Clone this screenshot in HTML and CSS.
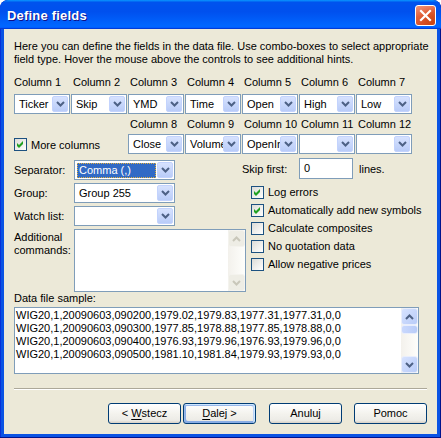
FILE: index.html
```html
<!DOCTYPE html>
<html>
<head>
<meta charset="utf-8">
<title>Define fields</title>
<link rel="stylesheet" href="styles.css">
</head>
<body>
<div class="window">
  <div class="titlebar">
    <span class="title">Define fields</span>
    <span class="close"><svg width="19" height="19" viewBox="0 0 19 19"><path d="M5 5L14 14M14 5L5 14" stroke="#fff" stroke-width="2.2" stroke-linecap="square"/></svg></span>
  </div>
  <div class="client">
    <p class="intro">Here you can define the fields in the data file. Use combo-boxes to select appropriate<br>field type. Hover the mouse above the controls to see additional hints.</p>

    <div class="row labels">
      <span class="clabel first">Column 1</span>
      <span class="clabel">Column 2</span>
      <span class="clabel">Column 3</span>
      <span class="clabel">Column 4</span>
      <span class="clabel">Column 5</span>
      <span class="clabel">Column 6</span>
      <span class="clabel">Column 7</span>
    </div>
    <div class="row combos">
      <div class="combo col"><span class="val">Ticker</span><span class="drop"><svg width="9" height="6" viewBox="0 0 9 6"><path d="M1 1L4.5 4.5L8 1" fill="none" stroke="#4D6185" stroke-width="2"/></svg></span></div>
      <div class="combo col"><span class="val">Skip</span><span class="drop"><svg width="9" height="6" viewBox="0 0 9 6"><path d="M1 1L4.5 4.5L8 1" fill="none" stroke="#4D6185" stroke-width="2"/></svg></span></div>
      <div class="combo col"><span class="val">YMD</span><span class="drop"><svg width="9" height="6" viewBox="0 0 9 6"><path d="M1 1L4.5 4.5L8 1" fill="none" stroke="#4D6185" stroke-width="2"/></svg></span></div>
      <div class="combo col"><span class="val">Time</span><span class="drop"><svg width="9" height="6" viewBox="0 0 9 6"><path d="M1 1L4.5 4.5L8 1" fill="none" stroke="#4D6185" stroke-width="2"/></svg></span></div>
      <div class="combo col"><span class="val">Open</span><span class="drop"><svg width="9" height="6" viewBox="0 0 9 6"><path d="M1 1L4.5 4.5L8 1" fill="none" stroke="#4D6185" stroke-width="2"/></svg></span></div>
      <div class="combo col"><span class="val">High</span><span class="drop"><svg width="9" height="6" viewBox="0 0 9 6"><path d="M1 1L4.5 4.5L8 1" fill="none" stroke="#4D6185" stroke-width="2"/></svg></span></div>
      <div class="combo col"><span class="val">Low</span><span class="drop"><svg width="9" height="6" viewBox="0 0 9 6"><path d="M1 1L4.5 4.5L8 1" fill="none" stroke="#4D6185" stroke-width="2"/></svg></span></div>
    </div>

    <div class="row labels second">
      <span class="clabel">Column 8</span>
      <span class="clabel">Column 9</span>
      <span class="clabel">Column 10</span>
      <span class="clabel">Column 11</span>
      <span class="clabel">Column 12</span>
    </div>
    <div class="row combos">
      <div class="more">
        <span class="cb"><svg width="11" height="11" viewBox="0 0 11 11"><polygon points="2,4 4,6 8,2 8,5 4,9 2,7" fill="#21A121"/></svg></span>
        <span>More columns</span>
      </div>
      <div class="combo col"><span class="val">Close</span><span class="drop"><svg width="9" height="6" viewBox="0 0 9 6"><path d="M1 1L4.5 4.5L8 1" fill="none" stroke="#4D6185" stroke-width="2"/></svg></span></div>
      <div class="combo col"><span class="val">Volume</span><span class="drop"><svg width="9" height="6" viewBox="0 0 9 6"><path d="M1 1L4.5 4.5L8 1" fill="none" stroke="#4D6185" stroke-width="2"/></svg></span></div>
      <div class="combo col"><span class="val">OpenInt</span><span class="drop"><svg width="9" height="6" viewBox="0 0 9 6"><path d="M1 1L4.5 4.5L8 1" fill="none" stroke="#4D6185" stroke-width="2"/></svg></span></div>
      <div class="combo col"><span class="val"></span><span class="drop"><svg width="9" height="6" viewBox="0 0 9 6"><path d="M1 1L4.5 4.5L8 1" fill="none" stroke="#4D6185" stroke-width="2"/></svg></span></div>
      <div class="combo col"><span class="val"></span><span class="drop"><svg width="9" height="6" viewBox="0 0 9 6"><path d="M1 1L4.5 4.5L8 1" fill="none" stroke="#4D6185" stroke-width="2"/></svg></span></div>
    </div>

    <div class="mid">
      <div class="left">
        <div class="frow first">
          <span class="flabel">Separator:</span>
          <div class="combo wide"><span class="val"><span class="sel">Comma (,)</span></span><span class="drop"><svg width="9" height="6" viewBox="0 0 9 6"><path d="M1 1L4.5 4.5L8 1" fill="none" stroke="#4D6185" stroke-width="2"/></svg></span></div>
        </div>
        <div class="frow">
          <span class="flabel">Group:</span>
          <div class="combo wide"><span class="val">Group 255</span><span class="drop"><svg width="9" height="6" viewBox="0 0 9 6"><path d="M1 1L4.5 4.5L8 1" fill="none" stroke="#4D6185" stroke-width="2"/></svg></span></div>
        </div>
        <div class="frow">
          <span class="flabel">Watch list:</span>
          <div class="combo wide"><span class="val"></span><span class="drop"><svg width="9" height="6" viewBox="0 0 9 6"><path d="M1 1L4.5 4.5L8 1" fill="none" stroke="#4D6185" stroke-width="2"/></svg></span></div>
        </div>
        <div class="frow top">
          <span class="flabel multi">Additional<br>commands:</span>
          <div class="textarea">
            <div class="tspace"></div>
            <div class="vscroll disabled">
              <span class="sbtn"><svg width="9" height="6" viewBox="0 0 9 6"><path d="M1 5L4.5 1.5L8 5" fill="none" stroke="#C9C7BA" stroke-width="2"/></svg></span>
              <span class="track"></span>
              <span class="sbtn"><svg width="9" height="6" viewBox="0 0 9 6"><path d="M1 1L4.5 4.5L8 1" fill="none" stroke="#C9C7BA" stroke-width="2"/></svg></span>
            </div>
          </div>
        </div>
      </div>
      <div class="right">
        <div class="skip">
          <span class="skiplabel">Skip first:</span>
          <span class="edit">0</span>
          <span>lines.</span>
        </div>
        <div class="checks">
          <div class="crow"><span class="cb"><svg width="11" height="11" viewBox="0 0 11 11"><polygon points="2,4 4,6 8,2 8,5 4,9 2,7" fill="#21A121"/></svg></span><span>Log errors</span></div>
          <div class="crow"><span class="cb"><svg width="11" height="11" viewBox="0 0 11 11"><polygon points="2,4 4,6 8,2 8,5 4,9 2,7" fill="#21A121"/></svg></span><span>Automatically add new symbols</span></div>
          <div class="crow"><span class="cb"></span><span>Calculate composites</span></div>
          <div class="crow"><span class="cb"></span><span>No quotation data</span></div>
          <div class="crow"><span class="cb"></span><span>Allow negative prices</span></div>
        </div>
      </div>
    </div>

    <div class="sample-label">Data file sample:</div>
    <div class="listbox">
      <div class="lines">
        <div>WIG20,1,20090603,090200,1979.02,1979.83,1977.31,1977.31,0,0</div>
        <div>WIG20,1,20090603,090300,1977.85,1978.88,1977.85,1978.88,0,0</div>
        <div>WIG20,1,20090603,090400,1976.93,1979.96,1976.93,1979.96,0,0</div>
        <div>WIG20,1,20090603,090500,1981.10,1981.84,1979.93,1979.93,0,0</div>
      </div>
      <div class="vscroll">
        <span class="sbtn"><svg width="9" height="6" viewBox="0 0 9 6"><path d="M1 5L4.5 1.5L8 5" fill="none" stroke="#4D6185" stroke-width="2"/></svg></span>
        <span class="thumb"></span>
        <span class="track"></span>
        <span class="sbtn"><svg width="9" height="6" viewBox="0 0 9 6"><path d="M1 1L4.5 4.5L8 1" fill="none" stroke="#4D6185" stroke-width="2"/></svg></span>
      </div>
    </div>

    <div class="groove"></div>

    <div class="buttons">
      <span class="btn back">&lt;&nbsp;<u>W</u>stecz</span>
      <span class="btn default"><u>D</u>alej&nbsp;&gt;</span>
      <span class="btn cancel">Anuluj</span>
      <span class="btn help">Pomoc</span>
    </div>
  </div>
</div>
</body>
</html>
```

FILE: styles.css
```css
html, body {
  margin: 0;
  padding: 0;
  background: #ffffff;
}

body {
  font-family: "Liberation Sans", Arial, sans-serif;
  font-size: 11px;
  color: #000;
}

.window {
  width: 441px;
  height: 438px;
  display: flex;
  flex-direction: column;
  background: #0A53E4;
  border-radius: 8px 8px 0 0;
  box-shadow: inset -1px -1px #00138C, inset 1px 1px #0831D9;
  overflow: hidden;
}

.titlebar {
  height: 29px;
  flex: none;
  display: flex;
  align-items: center;
  justify-content: space-between;
  padding: 0 5px 0 7px;
  background: linear-gradient(180deg, #0997FF, #0053EE 8%, #0050EE 40%, #0066FF 88%, #0066FF 93%, #005BFF 95%, #003DD7 96%, #003DD7);
  border-radius: 8px 8px 0 0;
}

.title {
  color: #fff;
  font-weight: bold;
  font-size: 13px;
  letter-spacing: 0.2px;
  text-shadow: 1px 1px #0F1089;
  padding-top: 1px;
}

.close {
  width: 21px;
  height: 21px;
  box-sizing: border-box;
  border: 1px solid #fff;
  border-radius: 3px;
  background: radial-gradient(circle at 85% 85%, #CC4614, transparent 60%), linear-gradient(160deg, #F0957A, #E2603A 45%, #D54A22);
  display: flex;
  align-items: center;
  justify-content: center;
  margin-top: 1px;
}

.client {
  flex: 1;
  margin: 0 4px 4px 4px;
  background: #ECE9D8;
  padding: 11px 10px 0 10px;
  display: flex;
  flex-direction: column;
}

.intro {
  margin: 0;
  line-height: 13px;
  white-space: nowrap;
}

.row {
  display: flex;
  gap: 1px;
}

.labels {
  line-height: 13px;
  white-space: nowrap;
  margin-top: 10px;
}

.labels.second {
  margin-top: 4px;
  padding-left: 114px;
}

.clabel {
  width: 56px;
  padding-left: 2px;
  box-sizing: border-box;
}

.clabel.first {
  padding-left: 0;
}

.combos {
  margin-top: 5px;
}

.labels.second + .combos {
  margin-top: 3px;
}

.combo {
  height: 20px;
  box-sizing: border-box;
  border: 1px solid #7F9DB9;
  background: #fff;
  padding: 1px;
  display: flex;
  align-items: stretch;
}

.combo.col {
  width: 56px;
}

.combo.wide {
  width: 101px;
}

.val {
  flex: 1;
  min-width: 0;
  overflow: hidden;
  white-space: nowrap;
  padding-left: 3px;
  line-height: 16px;
}

.sel {
  display: inline-block;
  box-sizing: border-box;
  width: 79px;
  margin-left: -2px;
  padding: 0 2px;
  background: #316AC5;
  color: #fff;
  outline: 1px dotted #E0B040;
  outline-offset: -1px;
  line-height: 15px;
}

.drop {
  width: 16px;
  flex: none;
  box-sizing: border-box;
  border: 1px solid #C3D3FD;
  border-radius: 2px;
  background: linear-gradient(180deg, #D7E2FE, #B9CCF8);
  display: flex;
  align-items: center;
  justify-content: center;
}

.more {
  width: 113px;
  display: flex;
  align-items: center;
  gap: 4px;
  margin-top: 1px;
}

.cb {
  width: 13px;
  height: 13px;
  flex: none;
  box-sizing: border-box;
  border: 1px solid #1C5180;
  background: linear-gradient(135deg, #DCDCD7, #FFFFFF);
  display: flex;
  align-items: center;
  justify-content: center;
}

.mid {
  display: grid;
  grid-template-columns: 228px 1fr;
  margin-top: 4px;
}

.left {
  display: flex;
  flex-direction: column;
  gap: 3px;
  padding-top: 2px;
}

.frow {
  display: flex;
  align-items: center;
}

.frow.top {
  align-items: flex-start;
}

.flabel {
  width: 60px;
  flex: none;
  line-height: 13px;
}

.flabel.multi {
  padding-top: 2px;
}

.textarea {
  width: 172px;
  height: 63px;
  flex: none;
  box-sizing: border-box;
  border: 1px solid #7F9DB9;
  background: #fff;
  display: flex;
}

.tspace {
  flex: 1;
}

.vscroll {
  width: 17px;
  flex: none;
  display: flex;
  flex-direction: column;
  background: linear-gradient(90deg, #F3F1EC, #FEFEFB);
}

.sbtn {
  height: 17px;
  flex: none;
  box-sizing: border-box;
  border: 1px solid #E9EEFC;
  border-radius: 3px;
  background: linear-gradient(135deg, #D6E2FF, #B9CCF8);
  display: flex;
  align-items: center;
  justify-content: center;
}

.vscroll.disabled .sbtn {
  border-color: #F4F3EE;
  background: #EEEDE5;
}

.track {
  flex: 1;
}

.thumb {
  height: 9px;
  flex: none;
  box-sizing: border-box;
  border: 1px solid #E9EEFC;
  border-radius: 3px;
  background: linear-gradient(90deg, #C9D8FD, #B9CCF8);
}

.skip {
  display: flex;
  align-items: center;
  height: 21px;
}

.skiplabel {
  width: 57px;
  flex: none;
}

.edit {
  width: 54px;
  height: 21px;
  flex: none;
  box-sizing: border-box;
  border: 1px solid #7F9DB9;
  background: #fff;
  padding-left: 4px;
  line-height: 19px;
  margin-right: 6px;
}

.checks {
  margin-top: 4px;
  padding-left: 9px;
  display: flex;
  flex-direction: column;
}

.crow {
  height: 18px;
  display: flex;
  align-items: center;
  gap: 4px;
  white-space: nowrap;
}

.sample-label {
  line-height: 13px;
  margin-top: 0;
}

.listbox {
  width: 405px;
  height: 67px;
  box-sizing: border-box;
  margin-top: 2px;
  border: 1px solid #7F9DB9;
  background: #fff;
  display: flex;
}

.lines {
  flex: 1;
  padding: 1px 0 0 1px;
  line-height: 13px;
  white-space: nowrap;
}

.groove {
  height: 0;
  border-top: 1px solid #ACA899;
  border-bottom: 1px solid #fff;
  margin-top: 14px;
}

.buttons {
  display: flex;
  justify-content: flex-end;
  margin-top: 13px;
}

.btn {
  width: 73px;
  height: 21px;
  box-sizing: border-box;
  border: 1px solid #003C74;
  border-radius: 3px;
  background: linear-gradient(180deg, #FFFFFF, #F4F3EE 50%, #ECEBE6 86%, #D6D0C5);
  display: flex;
  align-items: center;
  justify-content: center;
  line-height: 13px;
  white-space: nowrap;
}

.btn.default {
  margin-left: 2px;
  box-shadow: inset -1px 1px #CEE7FF, inset 1px 2px #98B8EA, inset -2px 2px #BCD4F6, inset 1px -1px #89ADE4, inset 2px -2px #89ADE4;
}

.btn.cancel {
  margin-left: 13px;
}

.btn.help {
  margin-left: 12px;
}

.btn u {
  text-decoration-thickness: 1px;
  text-underline-offset: 2px;
}
```
